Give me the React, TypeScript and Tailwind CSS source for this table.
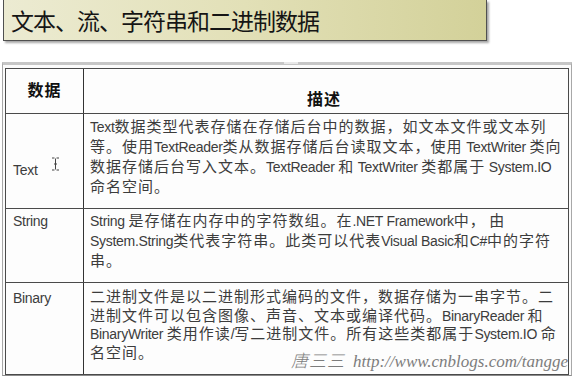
import React from "react";

const cjk = "font-['Liberation_Sans','Noto_Sans_CJK_SC',sans-serif]";

// split a line into latin runs and CJK runs, latin runs are set tighter
const Line = ({ text, lead }: { text: string; lead: string }) => {
  const parts = text.split(/([\x20-\x7e]+)/);
  return (
    <div className={`whitespace-nowrap ${lead}`}>
      {parts.map((p, i) =>
        i % 2 === 1 ? (
          <span key={i} className="text-[14px] tracking-[-0.3px]">
            {p}
          </span>
        ) : (
          <span key={i} className="text-[15px] tracking-[1px]">
            {p}
          </span>
        )
      )}
    </div>
  );
};

const rows = [
  {
    name: "Text",
    height: "h-[95px]",
    pad: "pt-[3px]",
    lead: "h-[20px] leading-[20px]",
    labelPad: "pt-[46px]",
    lines: [
      "Text数据类型代表存储在存储后台中的数据，如文本文件或文本列",
      "等。使用TextReader类从数据存储后台读取文本，使用 TextWriter 类向",
      "数据存储后台写入文本。TextReader 和 TextWriter 类都属于 System.IO",
      "命名空间。",
    ],
  },
  {
    name: "String",
    height: "h-[74px]",
    pad: "pt-[2px]",
    lead: "h-[20px] leading-[20px]",
    labelPad: "pt-[2px]",
    lines: [
      "String 是存储在内存中的字符数组。在.NET Framework中， 由",
      "System.String类代表字符串。此类可以代表Visual Basic和C#中的字符",
      "串。",
    ],
  },
  {
    name: "Binary",
    height: "h-[91px]",
    pad: "pt-[5px]",
    lead: "h-[18.5px] leading-[18.5px]",
    labelPad: "pt-[5px]",
    lines: [
      "二进制文件是以二进制形式编码的文件，数据存储为一串字节。二",
      "进制文件可以包含图像、声音、文本或编译代码。BinaryReader 和",
      "BinaryWriter 类用作读/写二进制文件。所有这些类都属于System.IO 命",
      "名空间。",
    ],
  },
];

const IBeam = () => (
  <svg width="9" height="14" viewBox="0 0 9 14" className="inline-block">
    <path d="M1 1h2.5M5.5 1H8M4.5 1.5v11M1 13h2.5M5.5 13H8M3 7h3" stroke="#444" strokeWidth="1" fill="none" />
  </svg>
);

export default function App() {
  return (
    <div className={`relative w-[574px] h-[378px] overflow-hidden bg-white text-[#3c3c3c] ${cjk}`}>
      {/* slide title */}
      <div className="ml-[3px] w-[484px] h-[41px] border border-t-0 border-[#505050] bg-gradient-to-r from-[#ecebd2] via-[#e2e0b7] to-[#d3d199] shadow-[2px_2px_2px_rgba(0,0,0,0.35)] pl-[7px] text-[23px] tracking-[-1px] leading-[40px] text-[#151515] font-['Noto_Sans_CJK_SC',sans-serif]">
        文本、流、字符串和二进制数据
      </div>

      {/* table frame */}
      <div className="relative mx-[2px] mt-[21px] h-[314px] border-t-[3px] border-t-[#c6c6c6] border-x border-b border-x-[#a8a8a8] border-b-[#8c8c8c] px-[2px] pt-[3px] bg-[#fbfbfb]">
        <div className="absolute left-[281px] top-[-3px] w-[14px] h-[2px] bg-[#e8e8e8]" />
        <div className="w-[564px] border border-[#4a4a4a] bg-[#fdfdfd]">
          <div className="flex h-[45px] border-b border-[#4a4a4a]">
            <div className="w-[78px] border-r border-[#333] flex items-center justify-center pb-[1px] text-[16px] font-bold tracking-[1px] text-[#111]">
              数据
            </div>
            <div className="flex-1 flex items-end justify-center pb-[1px] text-[16px] font-bold tracking-[1px] text-[#111] pr-[4px]">
              描述
            </div>
          </div>
          {rows.map((r, idx) => (
            <div
              key={r.name}
              className={`flex ${r.height} ${idx < rows.length - 1 ? "border-b border-[#4a4a4a]" : ""}`}
            >
              <div className={`w-[78px] border-r border-[#333] pl-[7px] ${r.labelPad}`}>
                <div className="flex items-center gap-[14px] h-[21px] leading-[21px] text-[14px] tracking-[-0.3px]">
                  <span>{r.name}</span>
                  {r.name === "Text" && (
                    <span className="relative top-[-7px]">
                      <IBeam />
                    </span>
                  )}
                </div>
              </div>
              <div className={`flex-1 pl-[6px] ${r.pad}`}>
                {r.lines.map((l, i) => (
                  <Line key={i} text={l} lead={r.lead} />
                ))}
              </div>
            </div>
          ))}
        </div>

        {/* watermark */}
        <div className="absolute right-[3px] bottom-[5px] flex items-baseline gap-[8px] leading-none text-[#7c7c7c] italic whitespace-nowrap">
          <span className="text-[17px] tracking-[1px] font-['Noto_Sans_CJK_SC',sans-serif] font-light">唐三三</span>
          <span className="text-[17px] font-['Liberation_Serif',serif]">http://www.cnblogs.com/tangge</span>
        </div>
      </div>
    </div>
  );
}
